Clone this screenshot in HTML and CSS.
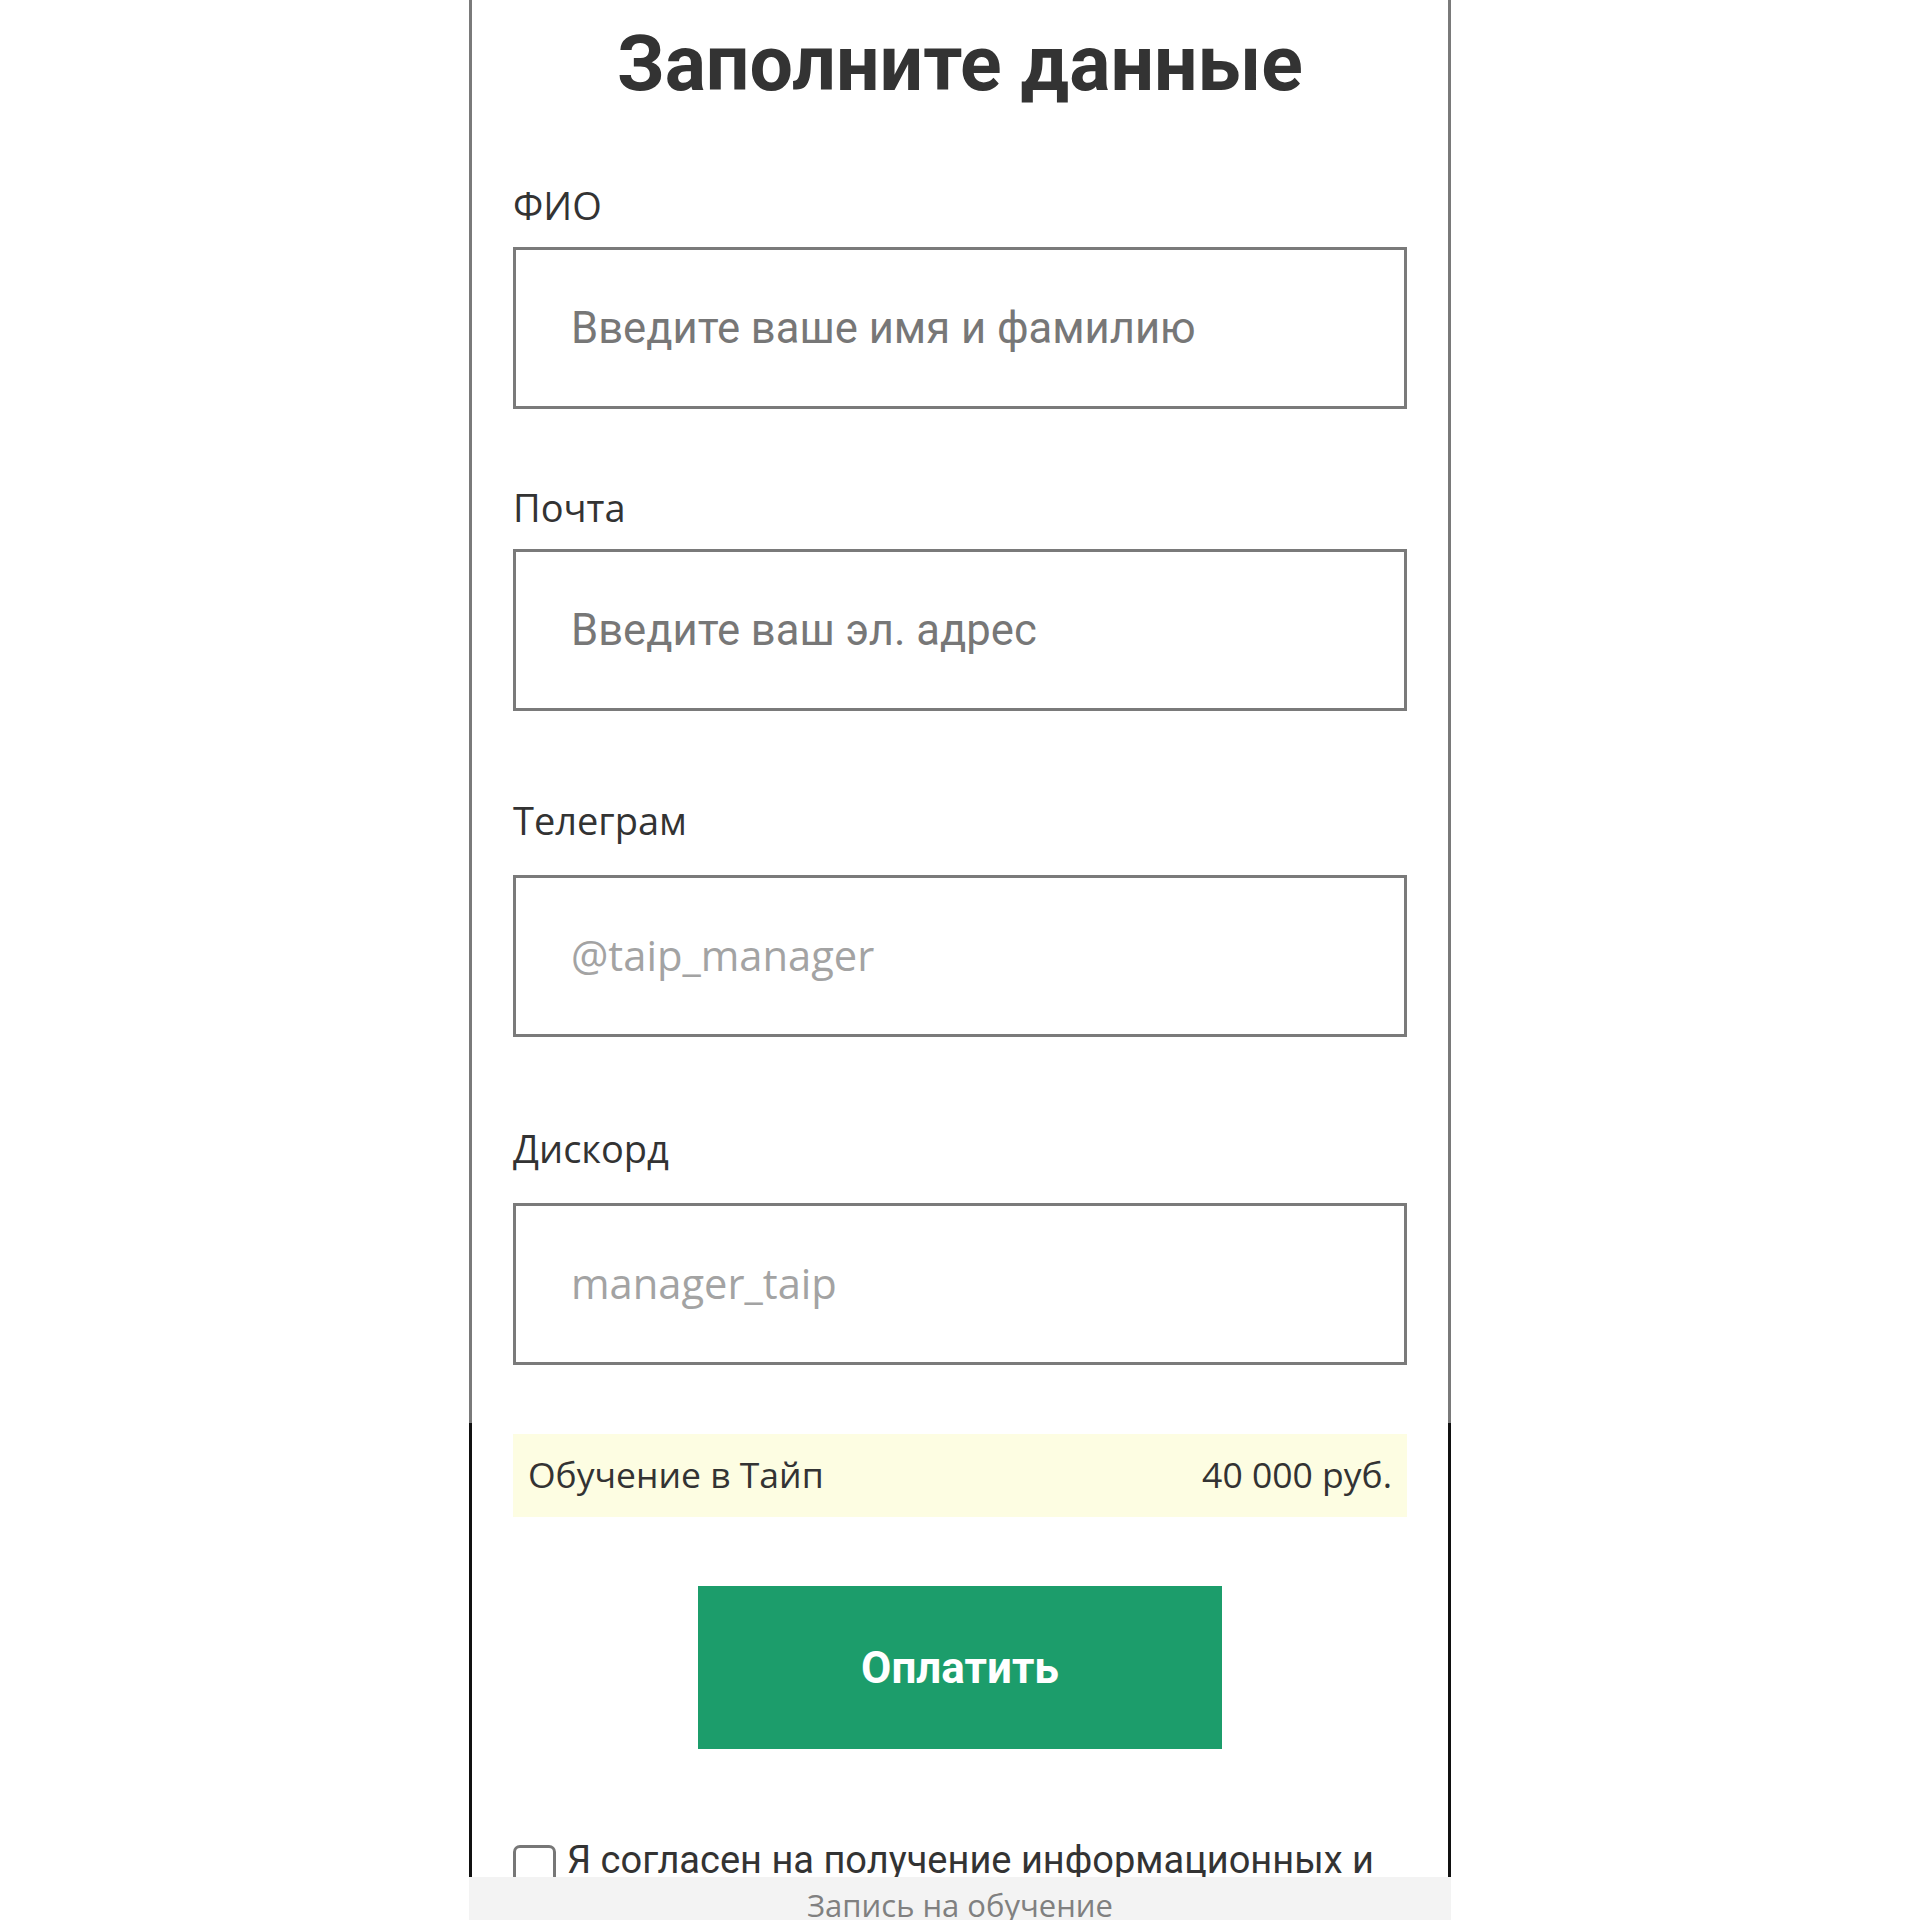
FILE: index.html
```
<!DOCTYPE html>
<html lang="ru">
<head>
  <meta charset="UTF-8" />
  <meta name="viewport" content="width=device-width, initial-scale=1.0" />
  <title>Запись на обучение</title>
  <link rel="stylesheet" href="styles.css">
</head>
<body>

  <div class="sheet">
    <!-- Contact details -->
    <section class="sheet-top">
      <h1 class="title">Заполните данные</h1>

      <div class="field">
        <label class="field-label" for="fullName">ФИО</label>
        <input class="field-input" type="text" id="fullName" placeholder="Введите ваше имя и фамилию" />
      </div>

      <div class="field">
        <label class="field-label" for="email">Почта</label>
        <input class="field-input" type="email" id="email" placeholder="Введите ваш эл. адрес" />
      </div>

      <div class="field field--social">
        <label class="field-label" for="telegram">Телеграм</label>
        <input class="field-input" type="text" id="telegram" placeholder="@taip_manager" />
      </div>

      <div class="field field--social">
        <label class="field-label" for="discord">Дискорд</label>
        <input class="field-input" type="text" id="discord" placeholder="manager_taip" />
      </div>
    </section>

    <!-- Order summary & payment -->
    <section class="sheet-bottom">
      <div class="order-row">
        <span>Обучение в Тайп</span>
        <span>40 000 руб.</span>
      </div>

      <button class="pay-btn" type="button">Оплатить</button>

      <label class="consent">
        <span class="consent-box"></span>
        <span>Я согласен на получение информационных и</span>
      </label>
    </section>

    <div class="footer-bar">Запись на обучение</div>
  </div>

</body>
</html>
```

FILE: styles.css
```
/* Global */
body {
  margin: 0;
  padding: 0;
  background: #fff;
  color: #333;
  font-family: "Open Sans", Arial, sans-serif;
}

/* Phone-like sheet */
.sheet {
  position: relative;
  width: 982px;
  height: 100vh;
  margin: 0 auto;
  box-sizing: border-box;
  overflow: hidden;
}
.sheet-top,
.sheet-bottom {
  border-left: 3px solid #7a7a7a;
  border-right: 3px solid #7a7a7a;
}
.sheet-top {
  padding: 17px 41px 58px;
}
.sheet-bottom {
  border-color: #111;
  padding: 11px 41px 40px;
}

/* Title */
.title {
  margin: 0 0 68px;
  font-family: Roboto, Arial, sans-serif;
  font-weight: 700;
  font-size: 77px;
  line-height: 94px;
  text-align: center;
  color: #333;
}

/* Fields */
.field + .field {
  margin-top: 72px;
}
.field + .field--social {
  margin-top: 83px;
}
.field--social + .field--social {
  margin-top: 85px;
}
.field-label {
  display: block;
  margin-bottom: 16px;
  font-size: 38px;
  line-height: 52px;
  color: #333;
}
.field--social .field-label {
  margin-bottom: 29px;
}
.field-input {
  display: block;
  width: 100%;
  height: 162px;
  box-sizing: border-box;
  padding: 0 55px;
  border: 3px solid #7a7a7a;
  border-radius: 0;
  background: #fff;
  font-family: Roboto, Arial, sans-serif;
  font-size: 43.6px;
  color: #333;
  outline: none;
}
.field-input::placeholder {
  color: #777;
}
.field--social .field-input {
  font-family: "Open Sans", Arial, sans-serif;
  font-size: 41.7px;
  padding-bottom: 3px;
}
.field--social .field-input::placeholder {
  color: #a3a3a3;
}

/* Order summary */
.order-row {
  display: flex;
  justify-content: space-between;
  align-items: center;
  height: 83px;
  padding: 0 15px 3px;
  box-sizing: border-box;
  background: #fdfde2;
  font-size: 35.5px;
  color: #333;
}

/* Pay button */
.pay-btn {
  display: block;
  width: 524px;
  height: 163px;
  margin: 69px auto 0;
  border: none;
  background: #1c9d6b;
  color: #fff;
  font-family: Roboto, Arial, sans-serif;
  font-weight: 700;
  font-size: 44px;
  cursor: pointer;
}

/* Consent checkbox */
.consent {
  display: flex;
  align-items: flex-start;
  gap: 11px;
  margin-top: 87px;
  font-family: Roboto, Arial, sans-serif;
  font-size: 38px;
  line-height: 49px;
  white-space: nowrap;
  color: #333;
}
.consent-box {
  flex: none;
  width: 43px;
  height: 43px;
  margin-top: 9px;
  box-sizing: border-box;
  border: 3px solid #777;
  border-radius: 7px;
}

/* Bottom bar */
.footer-bar {
  position: absolute;
  left: 0;
  right: 0;
  bottom: 0;
  height: 43px;
  padding-top: 7px;
  box-sizing: border-box;
  background: #f3f3f3;
  font-size: 31px;
  line-height: 42px;
  text-align: center;
  color: #808080;
  overflow: hidden;
}
```
